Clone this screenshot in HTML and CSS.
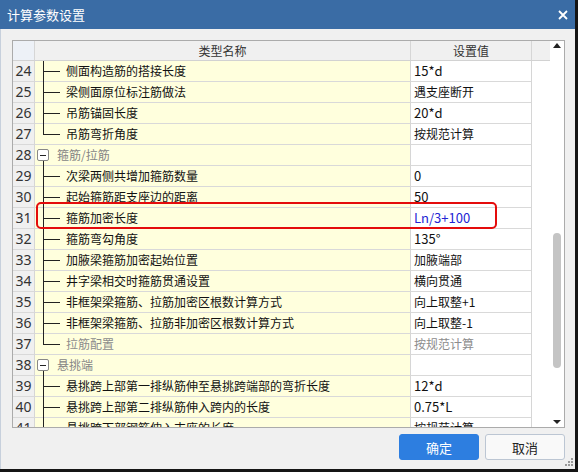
FILE: index.html
```html
<!DOCTYPE html>
<html lang="zh">
<head>
<meta charset="utf-8">
<title>计算参数设置</title>
<link rel="stylesheet" href="styles.css">
</head>
<body>
<div class="win">
  <div class="titlebar">
    <span class="title">计算参数设置</span>
    <svg class="close" width="10" height="10" viewBox="0 0 10 10"><path d="M1 1L9 9M9 1L1 9" stroke="#fff" stroke-width="1.8"/></svg>
  </div>
  <div class="main">
    <div class="grid">
      <div class="table">
        <div class="hdr">
          <div class="c num"></div>
          <div class="c name">类型名称</div>
          <div class="c val">设置值</div>
          <div class="c fill"></div>
        </div>
        <div class="rows">
          <div class="row"><div class="c num">24</div><div class="c name"><span class="branch"><i class="up"></i><i class="down"></i></span>侧面构造筋的搭接长度</div><div class="c val lat">15*d</div><div class="fill"></div></div>
          <div class="row"><div class="c num">25</div><div class="c name"><span class="branch"><i class="up"></i><i class="down"></i></span>梁侧面原位标注筋做法</div><div class="c val">遇支座断开</div><div class="fill"></div></div>
          <div class="row"><div class="c num">26</div><div class="c name"><span class="branch"><i class="up"></i><i class="down"></i></span>吊筋锚固长度</div><div class="c val lat">20*d</div><div class="fill"></div></div>
          <div class="row"><div class="c num">27</div><div class="c name"><span class="branch last"><i class="up"></i><i class="down"></i></span>吊筋弯折角度</div><div class="c val">按规范计算</div><div class="fill"></div></div>
          <div class="row"><div class="c num">28</div><div class="c name grp"><span class="tog"><i class="sp"></i><i class="box"></i><i class="ln"></i></span>箍筋/拉筋</div><div class="c val"></div><div class="fill"></div></div>
          <div class="row"><div class="c num">29</div><div class="c name"><span class="branch"><i class="up"></i><i class="down"></i></span>次梁两侧共增加箍筋数量</div><div class="c val lat">0</div><div class="fill"></div></div>
          <div class="row"><div class="c num">30</div><div class="c name"><span class="branch"><i class="up"></i><i class="down"></i></span>起始箍筋距支座边的距离</div><div class="c val lat">50</div><div class="fill"></div></div>
          <div class="row"><div class="c num">31</div><div class="c name"><span class="branch"><i class="up"></i><i class="down"></i></span>箍筋加密长度</div><div class="c val lat blue">Ln/3+100</div><div class="fill"></div></div>
          <div class="row"><div class="c num">32</div><div class="c name"><span class="branch"><i class="up"></i><i class="down"></i></span>箍筋弯勾角度</div><div class="c val lat">135°</div><div class="fill"></div></div>
          <div class="row"><div class="c num">33</div><div class="c name"><span class="branch"><i class="up"></i><i class="down"></i></span>加腋梁箍筋加密起始位置</div><div class="c val">加腋端部</div><div class="fill"></div></div>
          <div class="row"><div class="c num">34</div><div class="c name"><span class="branch"><i class="up"></i><i class="down"></i></span>井字梁相交时箍筋贯通设置</div><div class="c val">横向贯通</div><div class="fill"></div></div>
          <div class="row"><div class="c num">35</div><div class="c name"><span class="branch"><i class="up"></i><i class="down"></i></span>非框架梁箍筋、拉筋加密区根数计算方式</div><div class="c val">向上取整+1</div><div class="fill"></div></div>
          <div class="row"><div class="c num">36</div><div class="c name"><span class="branch"><i class="up"></i><i class="down"></i></span>非框架梁箍筋、拉筋非加密区根数计算方式</div><div class="c val">向上取整-1</div><div class="fill"></div></div>
          <div class="row"><div class="c num">37</div><div class="c name dis"><span class="branch last"><i class="up"></i><i class="down"></i></span>拉筋配置</div><div class="c val dis">按规范计算</div><div class="fill"></div></div>
          <div class="row"><div class="c num">38</div><div class="c name grp"><span class="tog"><i class="sp"></i><i class="box"></i><i class="ln"></i></span>悬挑端</div><div class="c val"></div><div class="fill"></div></div>
          <div class="row"><div class="c num">39</div><div class="c name"><span class="branch"><i class="up"></i><i class="down"></i></span>悬挑跨上部第一排纵筋伸至悬挑跨端部的弯折长度</div><div class="c val lat">12*d</div><div class="fill"></div></div>
          <div class="row"><div class="c num">40</div><div class="c name"><span class="branch"><i class="up"></i><i class="down"></i></span>悬挑跨上部第二排纵筋伸入跨内的长度</div><div class="c val lat">0.75*L</div><div class="fill"></div></div>
          <div class="row"><div class="c num">41</div><div class="c name"><span class="branch"><i class="up"></i><i class="down"></i></span>悬挑跨下部钢筋伸入支座的长度</div><div class="c val">按规范计算</div><div class="fill"></div></div>
          <div class="mark"></div>
        </div>
      </div>
      <div class="sb">
        <svg class="arrow up-a" width="8" height="5" viewBox="0 0 8 5"><path d="M0 5L4 0L8 5Z" fill="#222"/></svg>
        <div class="track"><div class="thumb"></div></div>
        <svg class="arrow down-a" width="8" height="4" viewBox="0 0 8 4"><path d="M0 0L8 0L4 4Z" fill="#222"/></svg>
      </div>
    </div>
    <div class="foot">
      <button class="btn primary">确定</button>
      <button class="btn">取消</button>
    </div>
  </div>
  <svg class="grip" width="9" height="8" viewBox="0 0 9 8"><g fill="#9a9a9a"><rect x="7" y="0" width="2" height="2"/><rect x="4" y="3" width="2" height="2"/><rect x="7" y="3" width="2" height="2"/><rect x="1" y="6" width="2" height="2"/><rect x="4" y="6" width="2" height="2"/><rect x="7" y="6" width="2" height="2"/></g></svg>
</div>
</body>
</html>
```

FILE: styles.css
```css
html, body {
  margin: 0;
  padding: 0;
  background: #151515;
}
body {
  width: 578px;
  height: 472px;
  overflow: hidden;
  font-family: "Noto Sans CJK SC", sans-serif;
}
.win {
  position: relative;
  width: 575px;
  height: 469px;
  background: #f0f0f0;
  display: flex;
  flex-direction: column;
}
.titlebar {
  height: 29px;
  flex: none;
  background: #3a6ca5;
  display: flex;
  align-items: center;
  justify-content: space-between;
  padding: 0 7px 0 7px;
  color: #fff;
  font-size: 13px;
}
.title { line-height: 29px; }
.main {
  flex: 1;
  border-left: 1px solid #c7d0dc;
  padding: 11px 10px 0 11px;
}
.grid {
  display: flex;
  height: 386px;
  border: 1px solid #ababab;
  background: #fff;
}
.table {
  width: 537px;
  display: flex;
  flex-direction: column;
  overflow: hidden;
}
.c { box-sizing: border-box; flex: none; }
.num { width: 22px; border-right: 1px solid #d6d6d6; }
.name { width: 376px; border-right: 1px solid #d6d6d6; }
.val { width: 121px; border-right: 1px solid #d6d6d6; }
.fill { width: 18px; flex: none; }
.hdr {
  flex: none;
  display: flex;
  height: 20px;
  box-sizing: border-box;
  background: #f0f0f0;
  border-bottom: 1px solid #d2d2d2;
}
.hdr .num { background: #edf1f7; }
.hdr .name, .hdr .val {
  text-align: center;
  font-size: 12px;
  line-height: 19px;
  color: #333;
}
.rows {
  position: relative;
  flex: 1;
  overflow: hidden;
}
.row {
  display: flex;
  height: 21px;
}
.row .c { border-bottom: 1px solid #d9d9d9; }
.row .num {
  background: #f0f0f0;
  text-align: center;
  font-family: "Noto Sans", sans-serif;
  font-size: 14px;
  line-height: 20px;
  color: #333;
}
.row .name {
  background: #ffffdd;
  display: flex;
  align-items: stretch;
  font-size: 12px;
  line-height: 20px;
  color: #111;
  white-space: nowrap;
}
.row .val {
  padding-left: 3px;
  font-size: 12px;
  line-height: 20px;
  color: #111;
  white-space: nowrap;
}
.row .val.lat { font-size: 13px; }
.row .val.blue { color: #2323d4; }
.row .dis { color: #8c8c8c; }
.row .grp { color: #858585; }

.branch {
  width: 17px;
  margin: 0 6px -1px 8px;
  display: flex;
  flex-direction: column;
}
.branch i { display: block; }
.branch .up {
  height: 11px;
  box-sizing: border-box;
  border-left: 1px solid #222;
  border-bottom: 1px solid #222;
}
.branch .down {
  flex: 1;
  border-left: 1px solid #222;
}
.branch.last .down { border-left: none; }

.tog {
  width: 12px;
  margin: 0 8px -1px 2px;
  display: flex;
  flex-direction: column;
}
.tog i { display: block; }
.tog .sp { height: 4px; }
.tog .box {
  height: 12px;
  box-sizing: border-box;
  border: 1px solid #888;
  border-radius: 2px;
  background: #fff;
  display: flex;
  align-items: center;
  justify-content: center;
}
.tog .box::before {
  content: "";
  width: 6px;
  height: 1px;
  background: #222;
}
.tog .ln {
  flex: 1;
  margin-left: 6px;
  border-left: 1px solid #222;
}

.mark {
  position: absolute;
  left: 23px;
  top: 141px;
  width: 461px;
  height: 27px;
  box-sizing: border-box;
  border: 2px solid #e40c0c;
  border-radius: 5px;
}

.sb {
  width: 14px;
  flex: none;
  background: #fff;
  display: flex;
  flex-direction: column;
  align-items: center;
  padding: 2px 0 3px;
  box-sizing: border-box;
}
.arrow { flex: none; display: block; }
.track {
  flex: 1;
  width: 8px;
  padding-top: 185px;
  box-sizing: border-box;
}
.thumb {
  height: 135px;
  background: #c4c4c4;
  border-radius: 4px;
}

.foot {
  display: flex;
  justify-content: flex-end;
  gap: 6px;
  margin-top: 6px;
}
.btn {
  width: 80px;
  height: 26px;
  margin: 0;
  border-radius: 3px;
  font-family: "Noto Sans CJK SC", sans-serif;
  font-size: 13px;
  border: 1px solid #bcc6d3;
  background: #f9f9f9;
  color: #222;
  padding: 0;
}
.btn.primary {
  background: #2d7ee0;
  border-color: #2d7ee0;
  color: #fff;
}
.grip {
  position: absolute;
  right: 2px;
  bottom: 3px;
}
```
